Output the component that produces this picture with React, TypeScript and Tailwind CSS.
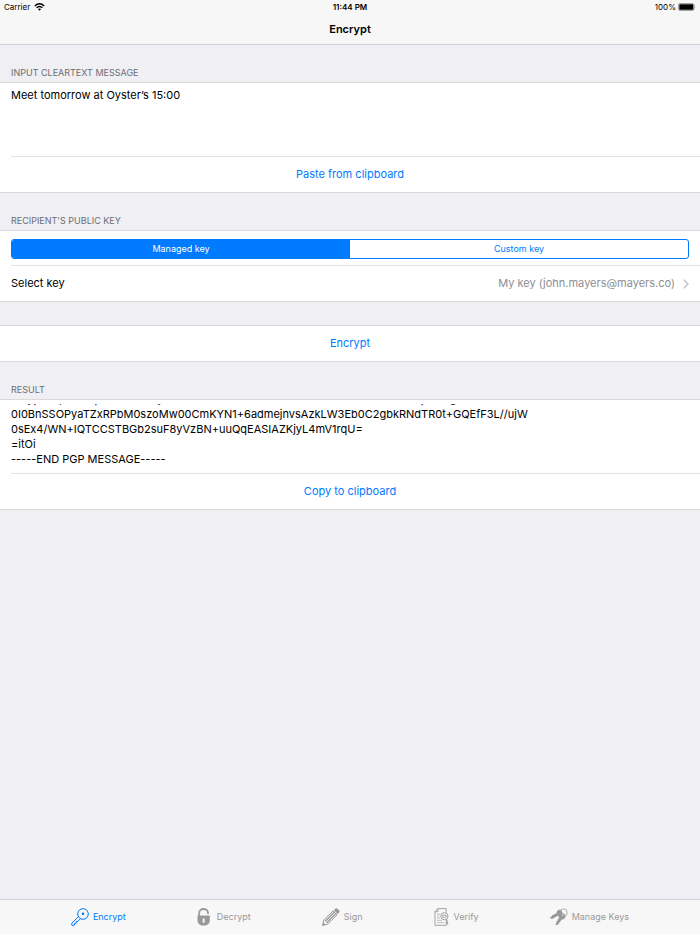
import React, { useEffect, useRef, useState } from 'react';

const RESULT = [
    '-----BEGIN PGP MESSAGE-----',
    '',
    'wcBMA2kTn7x0hRfVAQf/Zd8hKx1mLwTt0UeS4oBzWk6VnXaR3cHfE5i2sM9bLuA0',
    '4vIypT3k,WNa8pnMxE2TRkyZ0hK5uVfL3cBwD7XsHAMt1EiN6oUzRk4nKFSTNpdwagL',
    '0I0BnSSOPyaTZxRPbM0szoMw00CmKYN1+6admejnvsAzkLW3Eb0C2gbkRNdTR0t+GQEfF3L//ujW',
    '0sEx4/WN+IQTCCSTBGb2suF8yVzBN+uuQqEASIAZKjyL4mV1rqU=',
    '=itOi',
    '-----END PGP MESSAGE-----',
].join('\n');

const KeyIcon = () => (
    <svg width="18" height="18" viewBox="0 0 18 18" fill="none" stroke="currentColor" strokeWidth="1" aria-hidden="true">
        <circle cx="12" cy="6" r="5.3" />
        <circle cx="12" cy="5.8" r="1.3" fill="currentColor" stroke="none" />
        <path d="M7.6 8.6 L0.7 15.3 L0.9 17.3 L3.3 17.2 L3.5 15.4 L5.2 15.2 L5.3 13.5 L7 13.3 L9.3 10.8" />
    </svg>
);

const LockIcon = () => (
    <svg width="16" height="18" viewBox="0 0 16 18" fill="none" aria-hidden="true">
        <path d="M2.2 9 V5 A4.4 4 0 0 1 11 5 V6" stroke="currentColor" strokeWidth="1.8" />
        <path fillRule="evenodd" fill="currentColor" d="M0.5 7.6 H12.8 V12 A5.4 5.4 0 0 1 8.6 17.4 H4.7 A5.4 5.4 0 0 1 0.5 12 Z M5.7 10.4 V14.8 H7.6 V10.4 Z" />
    </svg>
);

const PencilIcon = () => (
    <svg width="18" height="18" viewBox="0 0 18 18" aria-hidden="true">
        <path fill="currentColor" d="M11.8 2.2 L13.6 0.5 Q14.6 -0.2 15.6 0.8 L17.2 2.5 Q18 3.5 17.1 4.5 L15.5 6 Z" />
        <path fill="none" stroke="currentColor" strokeWidth="1" d="M11 2.9 L1.9 11.9 L0.6 17.4 L6 15.9 L15 6.8 Z" />
        <path fill="none" stroke="currentColor" strokeWidth="1.3" d="M12.2 4.2 L3.2 13.2 M13.8 5.6 L4.7 14.7" />
        <path fill="currentColor" d="M0.3 17.7 L1.1 14.4 L3.7 16.8 Z" />
    </svg>
);

const DocumentIcon = () => (
    <svg width="16" height="18" viewBox="0 0 16 18" fill="none" stroke="currentColor" strokeWidth="0.9" aria-hidden="true">
        <path d="M12.2 4.6 V0.6 H3.8 L1 3.6 V17.3 H12.2 V12.2 M3.9 0.8 V3.7 H1.2" />
        <path d="M3 6.2 H6.4 M3 8.2 H5.2 M3 10.2 H6 M3 12.4 H8 M3 14.6 H10" strokeWidth="0.6" />
        <circle cx="10.4" cy="8.2" r="3.6" />
        <ellipse cx="10.4" cy="8.2" rx="2.1" ry="1.2" />
        <path d="M12.4 11.4 L13.8 16.4" strokeWidth="1.2" />
    </svg>
);

const KeysIcon = () => (
    <svg width="18" height="18" viewBox="0 0 18 18" aria-hidden="true">
        <circle cx="13.5" cy="4.6" r="3.7" fill="none" stroke="currentColor" strokeWidth="0.8" />
        <path fill="currentColor" d="M7 3.2 Q9 1 11.4 2.4 Q13.2 4.4 11.8 7 Q9.8 8.8 7.4 7.9 L2.2 10.9 L0.2 10.2 L0.4 8.8 L2 8.3 L2.2 7.1 L3.8 7 L4 5.9 L6.2 5.4 Z" />
        <path fill="currentColor" d="M9 7.2 Q11 4.8 13.6 5.4 Q16 6.8 15.2 9.4 Q14.2 11.6 11.8 11.6 L8 16.6 L6.2 17.2 L5.4 16 L6.6 14.8 L6.2 13.6 L7.6 12.8 L7.6 11.6 L8.8 10.4 Z" />
        <circle cx="12.8" cy="7.2" r="0.7" fill="#f7f7f7" />
    </svg>
);

const tabs = [
    { name: 'Encrypt', icon: <KeyIcon /> },
    { name: 'Decrypt', icon: <LockIcon /> },
    { name: 'Sign', icon: <PencilIcon /> },
    { name: 'Verify', icon: <DocumentIcon /> },
    { name: 'Manage Keys', icon: <KeysIcon /> },
];

const CellButton = ({ children }: { children: React.ReactNode }) => (
    <button type="button" className="block h-[35px] w-full text-center text-[#007aff]">
        {children}
    </button>
);

export default function App() {
    const [message, setMessage] = useState('Meet tomorrow at Oyster’s 15:00');
    const [keySource, setKeySource] = useState('managed');
    const [activeTab, setActiveTab] = useState('Encrypt');
    const resultRef = useRef<HTMLTextAreaElement>(null);

    // keep the end of the encrypted message in view
    useEffect(() => {
        if (resultRef.current) {
            resultRef.current.scrollTop = resultRef.current.scrollHeight;
        }
    }, []);

    return (
        <div className="flex min-h-screen flex-col bg-[#efeff4] font-['Inter','Liberation_Sans',sans-serif] text-[11px] text-black">
            <header className="border-b border-[#cfcfd2] bg-[#f7f7f7]">
                <div className="grid h-[14px] grid-cols-3 items-center px-1 text-[8px]">
                    <span className="flex items-center gap-1">
                        Carrier
                        <svg width="11" height="8" viewBox="0 0 11 8" fill="none" stroke="currentColor" strokeWidth="1.5" aria-hidden="true">
                            <path d="M0.8 3 Q5.5 -1.4 10.2 3 M2.6 4.8 Q5.5 2.2 8.4 4.8" />
                            <path d="M3.9 6 Q5.5 4.8 7.1 6 L5.5 7.7 Z" fill="currentColor" stroke="none" />
                        </svg>
                    </span>
                    <span className="text-center font-semibold">11:44 PM</span>
                    <span className="flex items-center justify-end gap-0.5">
                        100%
                        <svg width="18" height="8" viewBox="0 0 18 8" aria-hidden="true">
                            <rect x="0.5" y="0.5" width="15.5" height="7" rx="1.5" fill="none" stroke="#a0a0a0" />
                            <rect x="1.3" y="1.2" width="14" height="5.6" rx="0.6" fill="#000" />
                            <path d="M16.8 2.8 Q18 4 16.8 5.2 Z" fill="#888" />
                        </svg>
                    </span>
                </div>
                <h1 className="h-[30px] text-center leading-[30px] font-semibold">Encrypt</h1>
            </header>

            <main className="flex-1">
                <section>
                    <label htmlFor="message" className="block px-[11px] pt-[21px] pb-0.5 text-[9px] leading-[14px] text-[#6d6d72]">
                        INPUT CLEARTEXT MESSAGE
                    </label>
                    <div className="border-y border-[#d9d9dc] bg-white">
                        <textarea
                            id="message"
                            value={message}
                            onChange={(e) => setMessage(e.target.value)}
                            className="block h-[73px] w-full resize-none px-[11px] pt-[5px] leading-[15px] outline-none"
                        />
                        <div className="ml-[11px] border-t border-[#e3e3e5]" />
                        <CellButton>Paste from clipboard</CellButton>
                    </div>
                </section>

                <section>
                    <h2 className="px-[11px] pt-[21px] pb-0.5 text-[9px] leading-[14px] text-[#6d6d72]">RECIPIENT'S PUBLIC KEY</h2>
                    <div className="border-y border-[#d9d9dc] bg-white">
                        <div className="px-[11px] pt-2 pb-1.5">
                            <div className="flex h-5 overflow-hidden rounded-[3px] border border-[#007aff] text-[9px]">
                                <button
                                    type="button"
                                    aria-pressed={keySource === 'managed'}
                                    onClick={() => setKeySource('managed')}
                                    className={`flex-1 ${keySource === 'managed' ? 'bg-[#007aff] text-white' : 'text-[#007aff]'}`}
                                >
                                    Managed key
                                </button>
                                <button
                                    type="button"
                                    aria-pressed={keySource === 'custom'}
                                    onClick={() => setKeySource('custom')}
                                    className={`flex-1 ${keySource === 'custom' ? 'bg-[#007aff] text-white' : 'text-[#007aff]'}`}
                                >
                                    Custom key
                                </button>
                            </div>
                        </div>
                        <div className="ml-[11px] border-t border-[#e3e3e5]" />
                        <button type="button" className="flex h-[35px] w-full items-center justify-between px-[11px]">
                            <span>Select key</span>
                            <span className="flex items-center gap-2 text-[#8e8e93]">
                                My key (john.mayers@mayers.co)
                                <svg width="6" height="10" viewBox="0 0 6 10" fill="none" stroke="#c0c0c5" strokeWidth="1.4" aria-hidden="true">
                                    <path d="M0.8 0.8 L5 5 L0.8 9.2" />
                                </svg>
                            </span>
                        </button>
                    </div>
                </section>

                <div className="mt-[23px] border-y border-[#d9d9dc] bg-white">
                    <CellButton>Encrypt</CellButton>
                </div>

                <section>
                    <label htmlFor="result" className="block px-[11px] pt-[21px] pb-0.5 text-[9px] leading-[14px] text-[#6d6d72]">
                        RESULT
                    </label>
                    <div className="border-y border-[#d9d9dc] bg-white">
                        <div className="pt-1 pb-1.5">
                            <textarea
                                id="result"
                                ref={resultRef}
                                readOnly
                                value={RESULT}
                                className="block h-[63px] w-full resize-none [scrollbar-width:none] px-[11px] leading-[15px] outline-none"
                            />
                        </div>
                        <div className="ml-[11px] border-t border-[#e3e3e5]" />
                        <CellButton>Copy to clipboard</CellButton>
                    </div>
                </section>
            </main>

            <nav className="sticky bottom-0 flex h-[35px] items-center justify-center gap-[71px] border-t border-[#d0d0d3] bg-[#f7f7f7] text-[9px]">
                {tabs.map((tab) => (
                    <button
                        key={tab.name}
                        type="button"
                        onClick={() => setActiveTab(tab.name)}
                        className={`flex items-center gap-1 ${activeTab === tab.name ? 'text-[#007aff]' : 'text-[#999999]'}`}
                    >
                        {tab.icon}
                        {tab.name}
                    </button>
                ))}
            </nav>
        </div>
    );
}
